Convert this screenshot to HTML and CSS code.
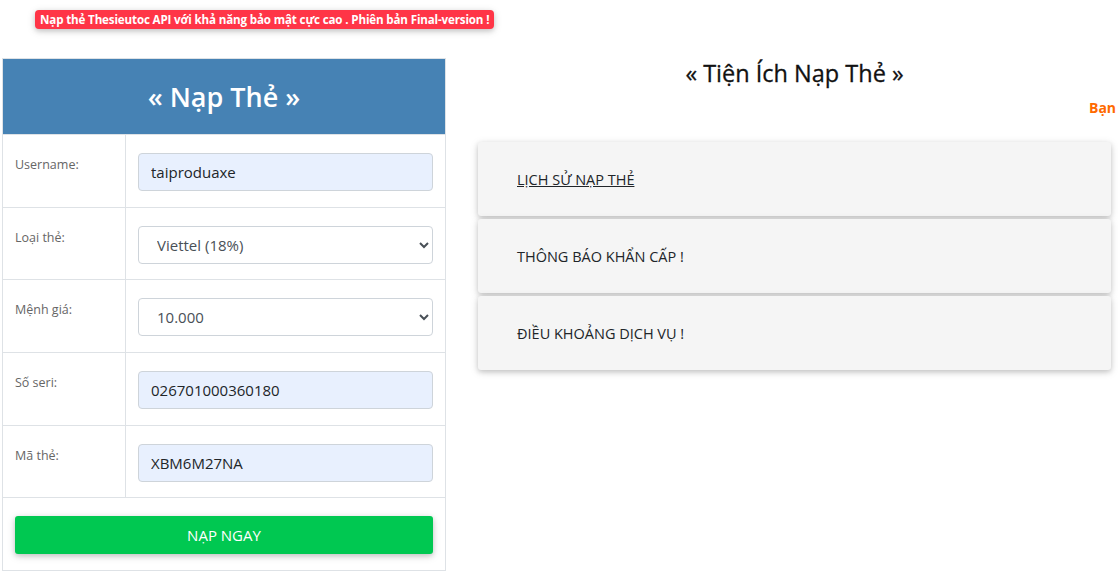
FILE: index.html
```html
<!DOCTYPE html>
<html lang="vi">
<head>
<meta charset="utf-8">
<title>Nạp Thẻ</title>
<link rel="stylesheet" href="styles.css">
</head>
<body>
<div class="topbar">
  <span class="badge">Nạp thẻ Thesieutoc API với khả năng bảo mật cực cao . Phiên bản Final-version !</span>
</div>
<div class="main">
  <section class="panel">
    <h1 class="panel-head">« Nạp Thẻ »</h1>
    <table class="form-table">
      <tr>
        <td class="lbl">Username:</td>
        <td class="fld"><input class="ctl filled" type="text" value="taiproduaxe"></td>
      </tr>
      <tr>
        <td class="lbl">Loại thẻ:</td>
        <td class="fld"><select class="ctl sel"><option>Viettel (18%)</option></select></td>
      </tr>
      <tr>
        <td class="lbl">Mệnh giá:</td>
        <td class="fld"><select class="ctl sel"><option>10.000</option></select></td>
      </tr>
      <tr>
        <td class="lbl">Số seri:</td>
        <td class="fld"><input class="ctl filled" type="text" value="026701000360180"></td>
      </tr>
      <tr>
        <td class="lbl">Mã thẻ:</td>
        <td class="fld"><input class="ctl filled" type="text" value="XBM6M27NA"></td>
      </tr>
      <tr>
        <td class="fld btn-cell" colspan="2"><button class="btn-go" type="button">NẠP NGAY</button></td>
      </tr>
    </table>
  </section>
  <section class="side">
    <h2 class="side-title">« Tiện Ích Nạp Thẻ »</h2>
    <div class="marquee"><span class="marquee-text">Bạn</span></div>
    <div class="cards">
      <div class="card"><a class="card-link" href="#">LỊCH SỬ NẠP THẺ</a></div>
      <div class="card"><span class="card-text">THÔNG BÁO KHẨN CẤP !</span></div>
      <div class="card"><span class="card-text">ĐIỀU KHOẢNG DỊCH VỤ !</span></div>
    </div>
  </section>
</div>
</body>
</html>
```

FILE: styles.css
```css
html, body {
  margin: 0;
  padding: 0;
  background: #fff;
  overflow: hidden;
}
body {
  font-family: "Open Sans", "Noto Sans", sans-serif;
  color: #212529;
  width: 1118px;
  height: 578px;
}
.topbar {
  padding: 7px 0 0 35px;
  height: 50px;
  box-sizing: border-box;
}
.badge {
  display: inline-block;
  background: #ff3547;
  color: #fff;
  font-weight: 700;
  font-size: 11.6px;
  line-height: 19px;
  padding: 0 5px;
  border-radius: 4px;
  box-shadow: 0 2px 5px 0 rgba(0,0,0,.16), 0 2px 10px 0 rgba(0,0,0,.12);
  letter-spacing: -0.15px;
}
.main {
  display: flex;
  align-items: flex-start;
}
.panel {
  margin-left: 2px;
  width: 444px;
  margin-top: 8px;
}
.panel-head {
  margin: 0;
  background: #4682b4;
  color: #fff;
  height: 76px;
  display: flex;
  align-items: center;
  justify-content: center;
  font-size: 27px;
  font-weight: 600;
  border: 1px solid #dee2e6;
  border-bottom: none;
  box-sizing: border-box;
}
.form-table {
  width: 100%;
  border-collapse: collapse;
}
.form-table td {
  border: 1px solid #dee2e6;
  vertical-align: top;
  padding: 18px 12px 15.67px;
}
.lbl {
  width: 98px;
  font-size: 12.5px;
  color: #666;
  line-height: 20px;
  padding-top: 20px !important;
}
.ctl {
  display: block;
  width: 100%;
  height: 38px;
  box-sizing: border-box;
  border: 1px solid #ced4da;
  border-radius: 4px;
  font-family: "Open Sans", "Noto Sans", sans-serif;
  font-size: 15px;
  padding: 0 12px;
  color: #212529;
  background: #fff;
}
.filled {
  background: #e8f0fe;
}
.sel {
  color: #495057;
  padding-left: 14px;
}
.btn-cell {
  padding: 18px 12px 15.67px !important;
}
.btn-go {
  display: block;
  width: 100%;
  height: 38px;
  border: none;
  border-radius: 3px;
  background: #00c851;
  color: #fff;
  font-family: "Open Sans", "Noto Sans", sans-serif;
  font-size: 15px;
  box-shadow: 0 2px 5px 0 rgba(0,0,0,.16), 0 2px 10px 0 rgba(0,0,0,.12);
}
.side {
  margin-left: 32px;
  width: 633px;
}
.side-title {
  margin: 8px 0 0;
  text-align: center;
  font-size: 23.5px;
  font-weight: 500;
  line-height: 30px;
  color: #111;
  -webkit-text-stroke: 0.3px #111;
}
.marquee {
  margin-top: 8px;
  width: 640px;
  overflow: hidden;
  white-space: nowrap;
  height: 22px;
}
.marquee-text {
  display: inline-block;
  margin-left: 611px;
  color: #ff6a00;
  font-weight: 700;
  font-size: 14px;
  line-height: 22px;
}
.cards {
  margin-top: 24px;
  display: flex;
  flex-direction: column;
  gap: 3px;
}
.card {
  background: #f5f5f5;
  height: 74px;
  border-radius: 3px;
  display: flex;
  align-items: center;
  padding-left: 39px;
  box-shadow: 0 2px 5px 0 rgba(0,0,0,.16), 0 2px 10px 0 rgba(0,0,0,.12);
  font-size: 14.5px;
}
.card-link {
  color: #212529;
  text-decoration: underline;
}
.card-text {
  color: #212529;
}
```
